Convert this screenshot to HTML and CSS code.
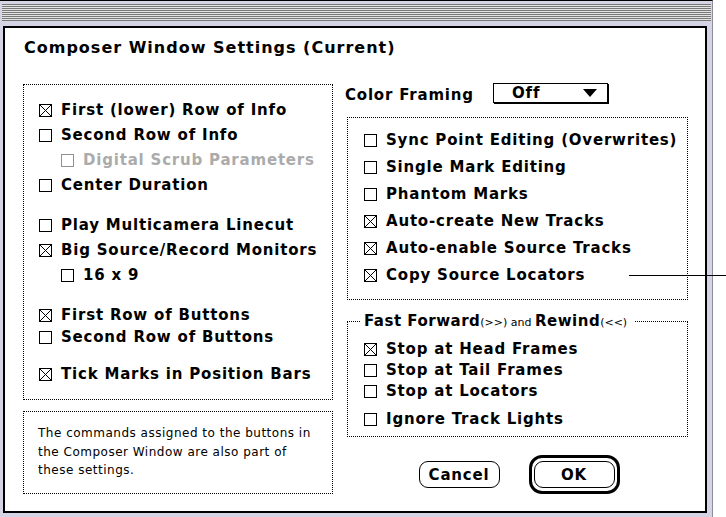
FILE: index.html
```html
<!DOCTYPE html>
<html>
<head>
<meta charset="utf-8">
<title>Composer Window Settings</title>
<link rel="stylesheet" href="styles.css">
</head>
<body>
<div class="window">
  <svg class="titlebar" width="714" height="17" viewBox="0 0 714 17" preserveAspectRatio="none">
    <rect x="0" y="0" width="714" height="17" fill="#e4e4e4"/>
    <path d="M0 0.5H714M0 2.5H714M0 4.5H714M0 6.5H714M0 8.5H714M0 10.5H714M0 12.5H714M0 14.5H714M0 16.5H714" stroke="#777" stroke-width="1"/>
  </svg>
  <div class="content">
    <div class="dlg-title">Composer Window Settings (Current)</div>
    <div class="columns">
      <div class="col">
        <div class="group group-main">
          <div class="cb"><svg class="box" width="13" height="13" viewBox="0 0 13 13"><rect x="0.5" y="0.5" width="12" height="12"/><path d="M1 1L12 12M12 1L1 12"/></svg><span>First (lower) Row of Info</span></div>
          <div class="cb"><svg class="box" width="13" height="13" viewBox="0 0 13 13"><rect x="0.5" y="0.5" width="12" height="12"/></svg><span>Second Row of Info</span></div>
          <div class="cb indent disabled"><svg class="box" width="13" height="13" viewBox="0 0 13 13"><rect x="0.5" y="0.5" width="12" height="12"/></svg><span>Digital Scrub Parameters</span></div>
          <div class="cb"><svg class="box" width="13" height="13" viewBox="0 0 13 13"><rect x="0.5" y="0.5" width="12" height="12"/></svg><span>Center Duration</span></div>
          <div class="cb sep"><svg class="box" width="13" height="13" viewBox="0 0 13 13"><rect x="0.5" y="0.5" width="12" height="12"/></svg><span>Play Multicamera Linecut</span></div>
          <div class="cb"><svg class="box" width="13" height="13" viewBox="0 0 13 13"><rect x="0.5" y="0.5" width="12" height="12"/><path d="M1 1L12 12M12 1L1 12"/></svg><span>Big Source/Record Monitors</span></div>
          <div class="cb indent"><svg class="box" width="13" height="13" viewBox="0 0 13 13"><rect x="0.5" y="0.5" width="12" height="12"/></svg><span>16 x 9</span></div>
          <div class="cb sep"><svg class="box" width="13" height="13" viewBox="0 0 13 13"><rect x="0.5" y="0.5" width="12" height="12"/><path d="M1 1L12 12M12 1L1 12"/></svg><span>First Row of Buttons</span></div>
          <div class="cb tight"><svg class="box" width="13" height="13" viewBox="0 0 13 13"><rect x="0.5" y="0.5" width="12" height="12"/></svg><span>Second Row of Buttons</span></div>
          <div class="cb sep-md"><svg class="box" width="13" height="13" viewBox="0 0 13 13"><rect x="0.5" y="0.5" width="12" height="12"/><path d="M1 1L12 12M12 1L1 12"/></svg><span>Tick Marks in Position Bars</span></div>
        </div>
        <div class="group note">The commands assigned to the buttons in<br>the Composer Window are also part of<br>these settings.</div>
      </div>
      <div class="col">
        <div class="color-row">
          <span class="lbl">Color Framing</span>
          <div class="popup"><span>Off</span><svg class="tri" width="14" height="8" viewBox="0 0 14 8"><path d="M0 0H14L7 8Z"/></svg></div>
        </div>
        <div class="group group-edit">
          <div class="cb"><svg class="box" width="13" height="13" viewBox="0 0 13 13"><rect x="0.5" y="0.5" width="12" height="12"/></svg><span>Sync Point Editing (Overwrites)</span></div>
          <div class="cb"><svg class="box" width="13" height="13" viewBox="0 0 13 13"><rect x="0.5" y="0.5" width="12" height="12"/></svg><span>Single Mark Editing</span></div>
          <div class="cb"><svg class="box" width="13" height="13" viewBox="0 0 13 13"><rect x="0.5" y="0.5" width="12" height="12"/></svg><span>Phantom Marks</span></div>
          <div class="cb"><svg class="box" width="13" height="13" viewBox="0 0 13 13"><rect x="0.5" y="0.5" width="12" height="12"/><path d="M1 1L12 12M12 1L1 12"/></svg><span>Auto-create New Tracks</span></div>
          <div class="cb"><svg class="box" width="13" height="13" viewBox="0 0 13 13"><rect x="0.5" y="0.5" width="12" height="12"/><path d="M1 1L12 12M12 1L1 12"/></svg><span>Auto-enable Source Tracks</span></div>
          <div class="cb"><svg class="box" width="13" height="13" viewBox="0 0 13 13"><rect x="0.5" y="0.5" width="12" height="12"/><path d="M1 1L12 12M12 1L1 12"/></svg><span>Copy Source Locators</span></div>
        </div>
        <fieldset class="group group-ff">
          <legend><b>Fast Forward</b><small>(&gt;&gt;) and </small><b>Rewind</b><small>(&lt;&lt;)</small></legend>
          <div class="cb"><svg class="box" width="13" height="13" viewBox="0 0 13 13"><rect x="0.5" y="0.5" width="12" height="12"/><path d="M1 1L12 12M12 1L1 12"/></svg><span>Stop at Head Frames</span></div>
          <div class="cb"><svg class="box" width="13" height="13" viewBox="0 0 13 13"><rect x="0.5" y="0.5" width="12" height="12"/></svg><span>Stop at Tail Frames</span></div>
          <div class="cb"><svg class="box" width="13" height="13" viewBox="0 0 13 13"><rect x="0.5" y="0.5" width="12" height="12"/></svg><span>Stop at Locators</span></div>
          <div class="cb sep-sm"><svg class="box" width="13" height="13" viewBox="0 0 13 13"><rect x="0.5" y="0.5" width="12" height="12"/></svg><span>Ignore Track Lights</span></div>
        </fieldset>
        <div class="buttons">
          <div class="btn">Cancel</div>
          <div class="btn-default"><div class="btn">OK</div></div>
        </div>
      </div>
    </div>
  </div>
</div>
<div class="callout"></div>
</body>
</html>
```

FILE: styles.css
```css
html, body {
  margin: 0;
  padding: 0;
  background: #fff;
}
body {
  position: relative;
  width: 726px;
  height: 517px;
  overflow: hidden;
  font-family: "DejaVu Sans", "Liberation Sans", sans-serif;
  color: #000;
}
.window {
  box-sizing: border-box;
  width: 713px;
  height: 522px;
  background: #d4d4e4;
  border-top: 1px solid #000;
  border-right: 1px solid #8c8c9c;
  padding: 3px 5px 0 3px;
}
.titlebar {
  display: block;
  width: 709px;
  height: 17px;
  margin-left: -1px;
}
.content {
  box-sizing: border-box;
  height: 487px;
  margin-top: 5px;
  border: 2px solid #000;
  background: #fff;
  padding: 0 17px 0 18px;
}
.dlg-title {
  font-weight: bold;
  font-size: 16px;
  letter-spacing: 1px;
  line-height: 19px;
  margin-top: 10px;
  margin-left: 1px;
}
.columns {
  display: grid;
  grid-template-columns: 310px 341px;
  column-gap: 14px;
  margin-top: 25px;
}
.col {
  display: flex;
  flex-direction: column;
}
.group {
  box-sizing: border-box;
  border: 1px dotted #000;
}
.group-main {
  margin-top: 2px;
  height: 316px;
  padding-top: 13px;
}
.cb {
  display: flex;
  align-items: center;
  gap: 9px;
  height: 25px;
  padding-left: 15px;
  font-weight: bold;
  font-size: 15px;
  letter-spacing: 0.8px;
  line-height: 17px;
  white-space: nowrap;
}
.box {
  width: 13px;
  height: 13px;
  flex: none;
}
.box rect {
  fill: #fff;
  stroke: #000;
  stroke-width: 1;
}
.box path {
  stroke: #000;
  stroke-width: 1;
  fill: none;
}
.cb.indent {
  padding-left: 37px;
}
.cb.disabled {
  color: #ababab;
}
.cb.disabled .box rect {
  stroke: #909090;
}
.cb.sep { margin-top: 15px; }
.cb.tight { margin-top: -3px; }
.cb.sep-md { margin-top: 12px; }
.note {
  margin-top: 11px;
  height: 83px;
  padding: 12px 0 0 14px;
  font-size: 12px;
  line-height: 18.5px;
  letter-spacing: 0.5px;
}
.color-row {
  display: flex;
  align-items: center;
  height: 21px;
}
.lbl {
  width: 146px;
  font-weight: bold;
  font-size: 15px;
  letter-spacing: 0.8px;
  margin-left: -2px;
  margin-right: 2px;
  padding-top: 4px;
}
.popup {
  box-sizing: border-box;
  width: 115px;
  height: 20px;
  border: 1px solid #000;
  box-shadow: 1px 1px 0 #000;
  display: flex;
  align-items: center;
  justify-content: space-between;
  padding: 0 10px 0 18px;
  font-weight: bold;
  font-size: 15px;
  letter-spacing: 0.8px;
}
.tri {
  width: 14px;
  height: 8px;
}
.tri path { fill: #000; }
.group-edit {
  margin-top: 14px;
  height: 183px;
  padding-top: 9px;
  padding-left: 1px;
}
.group-edit .cb { height: 27px; }
.group-ff {
  margin: 12px 0 0;
  min-width: 0;
  padding: 8px 0 6px 1px;
}
.group-ff legend {
  margin-left: 12px;
  padding: 0 8px 0 3px;
  line-height: 17px;
  white-space: nowrap;
}
.group-ff legend b {
  font-size: 15px;
  letter-spacing: 0.5px;
}
.group-ff legend small {
  font-size: 11px;
  font-weight: normal;
}
.group-ff .cb { height: 21px; }
.cb.sep-sm { margin-top: 7px; }
.buttons {
  display: flex;
  align-items: center;
  justify-content: center;
  gap: 29px;
  margin-top: 18px;
  padding-left: 3px;
}
.btn {
  box-sizing: border-box;
  width: 81px;
  height: 27px;
  border: 1px solid #000;
  border-radius: 9px;
  display: flex;
  align-items: center;
  justify-content: center;
  font-weight: bold;
  font-size: 15px;
  letter-spacing: 0.8px;
  background: #fff;
}
.btn-default {
  box-sizing: border-box;
  width: 91px;
  height: 39px;
  border: 3px solid #000;
  border-radius: 13px;
  padding: 3px 2px;
}
.btn-default .btn { width: 81px; }
.callout {
  position: absolute;
  left: 629px;
  top: 275px;
  width: 97px;
  height: 1px;
  background: #000;
}
```
